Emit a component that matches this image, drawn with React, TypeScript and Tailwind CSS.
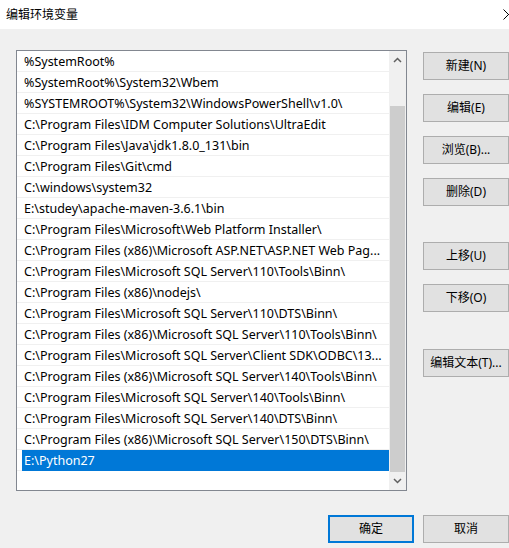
import React from 'react'

const PATHS = [
  '%SystemRoot%',
  '%SystemRoot%\\System32\\Wbem',
  '%SYSTEMROOT%\\System32\\WindowsPowerShell\\v1.0\\',
  'C:\\Program Files\\IDM Computer Solutions\\UltraEdit',
  'C:\\Program Files\\Java\\jdk1.8.0_131\\bin',
  'C:\\Program Files\\Git\\cmd',
  'C:\\windows\\system32',
  'E:\\studey\\apache-maven-3.6.1\\bin',
  'C:\\Program Files\\Microsoft\\Web Platform Installer\\',
  'C:\\Program Files (x86)\\Microsoft ASP.NET\\ASP.NET Web Pag...',
  'C:\\Program Files\\Microsoft SQL Server\\110\\Tools\\Binn\\',
  'C:\\Program Files (x86)\\nodejs\\',
  'C:\\Program Files\\Microsoft SQL Server\\110\\DTS\\Binn\\',
  'C:\\Program Files (x86)\\Microsoft SQL Server\\110\\Tools\\Binn\\',
  'C:\\Program Files\\Microsoft SQL Server\\Client SDK\\ODBC\\13...',
  'C:\\Program Files (x86)\\Microsoft SQL Server\\140\\Tools\\Binn\\',
  'C:\\Program Files\\Microsoft SQL Server\\140\\Tools\\Binn\\',
  'C:\\Program Files\\Microsoft SQL Server\\140\\DTS\\Binn\\',
  'C:\\Program Files (x86)\\Microsoft SQL Server\\150\\DTS\\Binn\\',
  'E:\\Python27',
]

const SIDE_BUTTONS = [
  { label: '新建(N)', mt: 'mt-[2px]' },
  { label: '编辑(E)', mt: 'mt-[14px]' },
  { label: '浏览(B)...', mt: 'mt-[14px]' },
  { label: '删除(D)', mt: 'mt-[14px]' },
  { label: '上移(U)', mt: 'mt-[36px]' },
  { label: '下移(O)', mt: 'mt-[14px]' },
  { label: '编辑文本(T)...', mt: 'mt-[37px]' },
]

function WinButton({ label, primary, className = '' }: { label: string; primary?: boolean; className?: string }) {
  return (
    <button
      className={`h-[28px] w-[86px] shrink-0 bg-[#e1e1e1] text-[12px] text-black flex items-center justify-center ${
        primary ? 'border-2 border-[#0078d7]' : 'border border-[#adadad]'
      } ${className}`}
    >
      {label}
    </button>
  )
}

export default function App() {
  const selected = PATHS.length - 1

  return (
    <div
      className="w-[509px] h-[548px] overflow-hidden bg-[#f0f0f0] flex flex-col text-black"
      style={{ fontFamily: '"Noto Sans", "Noto Sans CJK SC", sans-serif' }}
    >
      <div className="h-[29px] bg-white flex items-center pl-[6px] relative shrink-0">
        <span className="text-[12px]">编辑环境变量</span>
        <svg className="absolute left-[503px] top-[9px]" width="11" height="11" viewBox="0 0 11 11">
          <path d="M0.5 0.5 L10.5 10.5 M10.5 0.5 L0.5 10.5" stroke="#000" strokeWidth="1" fill="none" />
        </svg>
      </div>

      <div className="flex pl-[16px] pt-[21px]">
        <div className="w-[391px] h-[441px] border border-[#828790] bg-white flex shrink-0">
          <div className="flex-1 flex flex-col overflow-hidden">
            {PATHS.map((p, i) =>
              i === selected ? (
                <div key={p} className="h-[21px] shrink-0 border-b border-[#f0f0f0] pl-[5px]">
                  <div className="h-[21px] bg-[#0078d7] text-white text-[12.5px] leading-[21px] pl-[2px] whitespace-nowrap overflow-hidden">
                    {p}
                  </div>
                </div>
              ) : (
                <div
                  key={p}
                  className="h-[21px] shrink-0 border-b border-[#f0f0f0] text-[12.5px] leading-[22px] pl-[7px] whitespace-nowrap overflow-hidden"
                >
                  {p}
                </div>
              )
            )}
          </div>
          <div className="w-[17px] bg-[#f0f0f0] flex flex-col shrink-0">
            <div className="h-[17px] flex items-center justify-center shrink-0">
              <svg width="9" height="6" viewBox="0 0 9 6">
                <path d="M1 5 L4.5 1.5 L8 5" stroke="#606060" strokeWidth="1.5" fill="none" />
              </svg>
            </div>
            <div className="h-[38px] shrink-0" />
            <div className="flex-1 mx-[1px] bg-[#cdcdcd]" />
            <div className="h-[18px] flex items-center justify-center shrink-0">
              <svg width="9" height="6" viewBox="0 0 9 6">
                <path d="M1 1 L4.5 4.5 L8 1" stroke="#606060" strokeWidth="1.5" fill="none" />
              </svg>
            </div>
          </div>
        </div>

        <div className="flex flex-col ml-[16px]">
          {SIDE_BUTTONS.map(b => (
            <WinButton key={b.label} label={b.label} className={b.mt} />
          ))}
        </div>
      </div>

      <div className="flex justify-end gap-[9px] mt-[24px]">
        <WinButton label="确定" primary />
        <WinButton label="取消" />
      </div>
    </div>
  )
}
